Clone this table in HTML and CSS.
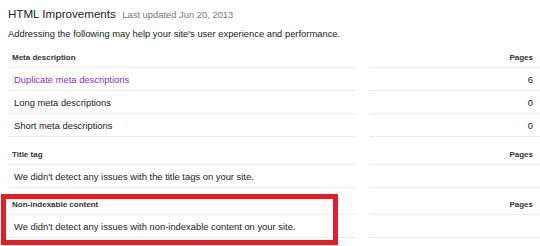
FILE: index.html
```html
<!DOCTYPE html>
<html lang="en">
<head>
    <meta charset="UTF-8">
    <meta name="viewport" content="width=device-width, initial-scale=1.0">
    <title>HTML Improvements</title>
    <link rel="stylesheet" href="styles.css">
</head>
<body>
    <div class="page">
        <div class="heading">
            <span class="title">HTML Improvements</span>
            <span class="updated">Last updated Jun 20, 2013</span>
        </div>
        <p class="intro">Addressing the following may help your site's user experience and performance.</p>

        <!-- Meta description -->
        <div class="section">
            <div class="cell head">Meta description</div>
            <div class="cell head num">Pages</div>
            <div class="cell row"><a href="#" class="link">Duplicate meta descriptions</a></div>
            <div class="cell row num">6</div>
            <div class="cell row">Long meta descriptions</div>
            <div class="cell row num">0</div>
            <div class="cell row">Short meta descriptions</div>
            <div class="cell row num">0</div>
        </div>

        <!-- Title tag -->
        <div class="section">
            <div class="cell head">Title tag</div>
            <div class="cell head num">Pages</div>
            <div class="cell row">We didn't detect any issues with the title tags on your site.</div>
            <div class="cell row num"></div>
        </div>

        <!-- Non-indexable content -->
        <div class="section marked">
            <div class="cell head">Non-indexable content</div>
            <div class="cell head num">Pages</div>
            <div class="cell row">We didn't detect any issues with non-indexable content on your site.</div>
            <div class="cell row num"></div>
        </div>
    </div>
</body>
</html>
```

FILE: styles.css
```css
* {
    margin: 0;
    padding: 0;
    box-sizing: border-box;
}

html, body {
    height: 100%;
}

body {
    font-family: "Liberation Sans", Arial, sans-serif;
    background: #fff;
    color: #222;
    overflow: hidden;
}

.page {
    padding: 6px 0 0 8px;
    width: 540px;
    min-height: 246px;
}

.heading {
    line-height: 14px;
    height: 14px;
}

.title {
    font-size: 11.6px;
    color: #222;
}

.updated {
    font-size: 9.4px;
    color: #777;
    margin-left: 2px;
}

.intro {
    font-size: 9.4px;
    line-height: 12px;
    margin-top: 8px;
    color: #222;
}

.section {
    display: grid;
    grid-template-columns: 348px 170px;
    column-gap: 14px;
    margin-top: 8px;
}

.section:first-of-type {
    margin-top: 7px;
}

.cell {
    border-bottom: 1px solid #ebebeb;
}

.head {
    font-size: 8px;
    font-weight: bold;
    color: #333;
    line-height: 10px;
    height: 20px;
    padding: 5px 4px 0;
}

.row {
    font-size: 9.4px;
    line-height: 11px;
    height: 23px;
    padding: 6px 6px 0;
    color: #222;
}

.num {
    text-align: right;
    padding-right: 7px;
}

.link {
    color: #7a35d0;
    text-decoration: none;
}

.marked {
    position: relative;
    margin-top: 7px;
    padding-bottom: 8px;
}

.marked::after {
    content: "";
    position: absolute;
    left: -7px;
    top: -1px;
    width: 337px;
    height: 51px;
    box-sizing: border-box;
    border: 5px solid #e31e26;
}
```
